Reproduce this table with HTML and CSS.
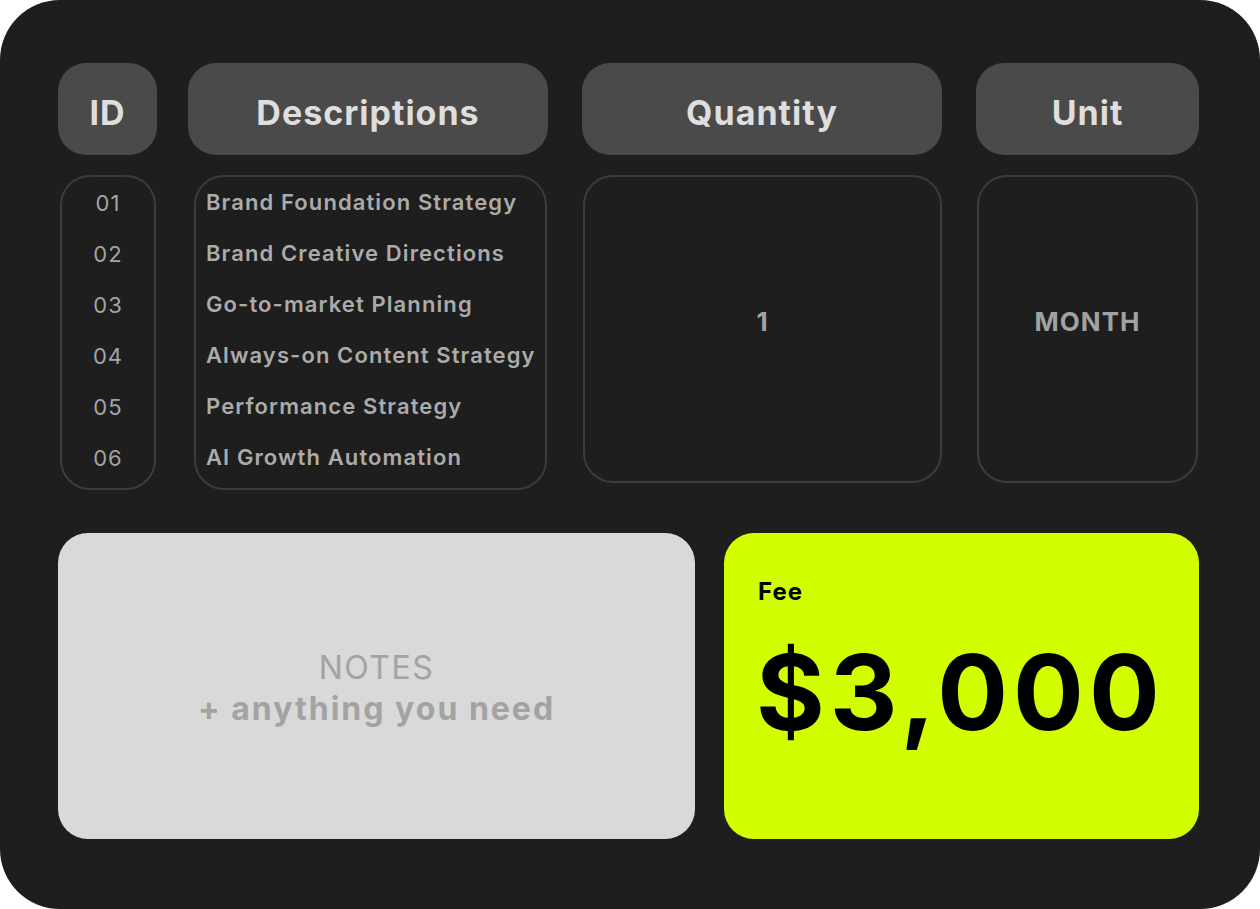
FILE: index.html
```html
<!DOCTYPE html>
<html>
<head>
<meta charset="utf-8">
<link rel="stylesheet" href="styles.css">
</head>
<body>
<div class="card">
  <div class="head-row">
    <div class="head h-id">ID</div>
    <div class="head h-desc">Descriptions</div>
    <div class="head h-qty">Quantity</div>
    <div class="head h-unit">Unit</div>
  </div>
  <div class="body-row">
    <div class="cell c-id">
      <span>01</span><span>02</span><span>03</span><span>04</span><span>05</span><span>06</span>
    </div>
    <div class="cell c-desc">
      <span>Brand Foundation Strategy</span>
      <span>Brand Creative Directions</span>
      <span>Go-to-market Planning</span>
      <span>Always-on Content Strategy</span>
      <span>Performance Strategy</span>
      <span>AI Growth Automation</span>
    </div>
    <div class="cell c-qty">1</div>
    <div class="cell c-unit">MONTH</div>
  </div>
  <div class="bottom-row">
    <div class="notes">
      <div class="notes-title">NOTES</div>
      <div class="notes-sub">+ anything you need</div>
    </div>
    <div class="fee">
      <div class="fee-label">Fee</div>
      <div class="fee-amount">$3,000</div>
    </div>
  </div>
</div>
</body>
</html>
```
FILE: styles.css
```css
html, body {
  margin: 0;
  padding: 0;
  background: #ffffff;
}
body {
  width: 1260px;
  height: 909px;
  font-family: Inter, "DejaVu Sans", sans-serif;
}
.card {
  width: 1260px;
  height: 909px;
  box-sizing: border-box;
  background: #1e1e1e;
  border-radius: 60px;
  padding: 63px 61px 0 58px;
}
.head-row {
  display: flex;
  height: 92px;
}
.head {
  box-sizing: border-box;
  background: #4a4a4a;
  border-radius: 28px;
  color: #dedede;
  font-weight: 700;
  font-size: 34px;
  letter-spacing: 1px;
  padding-top: 6px;
  display: flex;
  align-items: center;
  justify-content: center;
}
.h-id { width: 99px; margin-right: 31px; }
.h-desc { width: 360px; margin-right: 34px; }
.h-qty { width: 360px; margin-right: 34px; }
.h-unit { width: 223px; }
.body-row {
  display: flex;
  align-items: flex-start;
  margin-top: 20px;
  height: 315px;
}
.cell {
  box-sizing: border-box;
  border: 2px solid #3c3c3c;
  border-radius: 30px;
}
.c-id {
  width: 96px;
  margin-left: 2px;
  height: 315px;
  display: flex;
  flex-direction: column;
  align-items: center;
  padding-top: 13px;
  gap: 25px;
  color: #a4a4a4;
  font-size: 22px;
  letter-spacing: 1px;
  font-weight: 400;
  line-height: 26px;
}
.c-desc {
  width: 353px;
  margin-left: 38px;
  height: 315px;
  display: flex;
  flex-direction: column;
  padding: 12px 0 0 10px;
  gap: 25px;
  color: #ababab;
  font-size: 22px;
  letter-spacing: 1.1px;
  font-weight: 600;
  line-height: 26px;
  white-space: nowrap;
}
.c-qty, .c-unit {
  height: 308px;
  display: flex;
  align-items: center;
  justify-content: center;
  padding-bottom: 16px;
  color: #a2a2a2;
  font-size: 26px;
  letter-spacing: 1px;
  font-weight: 700;
}
.c-qty { width: 359px; margin-left: 36px; }
.c-unit { width: 221px; margin-left: 35px; }
.bottom-row {
  display: flex;
  gap: 29px;
  margin-top: 43px;
  height: 306px;
}
.notes {
  width: 637px;
  background: #d9d9d9;
  border-radius: 30px;
  display: flex;
  flex-direction: column;
  align-items: center;
  justify-content: center;
  color: #a3a3a3;
  font-size: 32px;
  line-height: 41px;
}
.notes-title { font-weight: 400; letter-spacing: 1.5px; margin-top: 4px; }
.notes-sub { font-weight: 700; letter-spacing: 2px; }
.fee {
  width: 475px;
  background: #d1ff00;
  border-radius: 30px;
  box-sizing: border-box;
  padding: 44px 0 0 34px;
  color: #000;
}
.fee-label {
  font-size: 24px;
  letter-spacing: 1px;
  font-weight: 700;
  line-height: 30px;
}
.fee-amount {
  font-size: 105px;
  font-weight: 700;
  letter-spacing: 5px;
  line-height: 130px;
  margin-top: 20px;
  margin-left: -2px;
}
```
